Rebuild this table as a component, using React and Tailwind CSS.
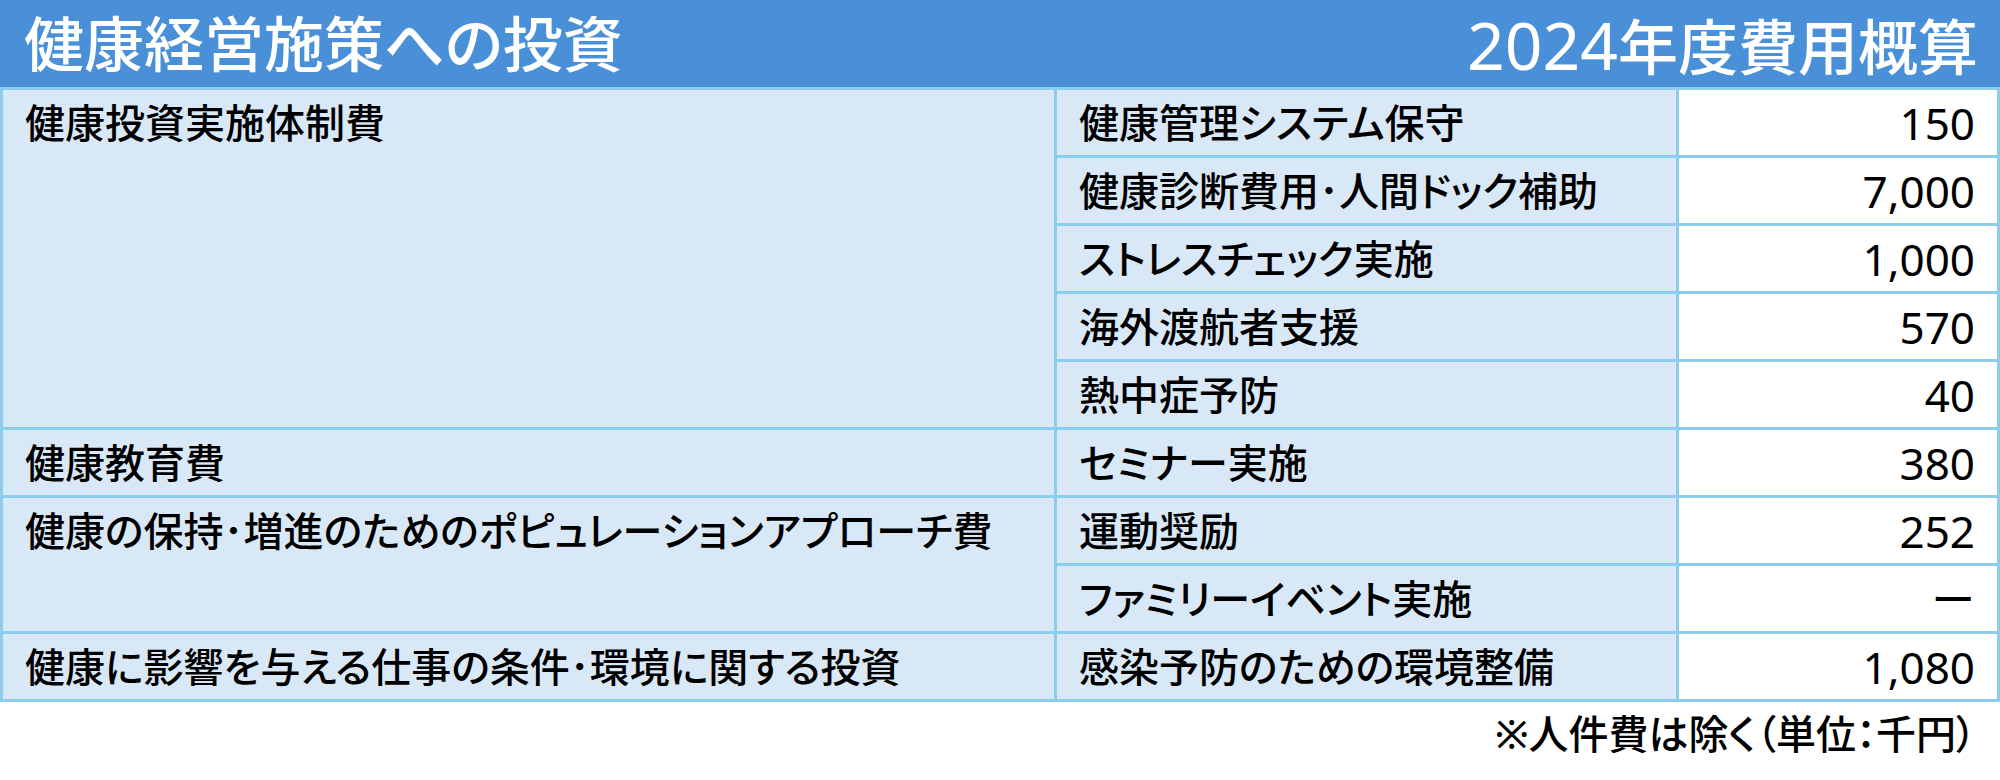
import React from 'react';

const rows = [
    { group: '健康投資実施体制費', span: 5, item: '健康管理システム保守', cost: '150' },
    { item: '健康診断費用･人間ドック補助', cost: '7,000' },
    { item: 'ストレスチェック実施', cost: '1,000' },
    { item: '海外渡航者支援', cost: '570' },
    { item: '熱中症予防', cost: '40' },
    { group: '健康教育費', span: 1, item: 'セミナー実施', cost: '380' },
    { group: '健康の保持･増進のためのポピュレーションアプローチ費', span: 2, item: '運動奨励', cost: '252' },
    { item: 'ファミリーイベント実施', cost: 'ー' },
    { group: '健康に影響を与える仕事の条件･環境に関する投資', span: 1, item: '感染予防のための環境整備', cost: '1,080' },
];

const font = { fontFamily: '"Noto Sans", "Noto Sans CJK JP", sans-serif' };

const App = () => {
    return (
        <div className="w-[2000px] h-[780px] bg-white text-black [font-feature-settings:'palt']" style={font}>
            <div className="h-[87px] bg-[#4a90d9] flex items-center justify-between pl-[24px] pr-[22px] text-white text-[60px] font-medium leading-none">
                <span>健康経営施策への投資</span>
                <span>
                    <span className="text-[66px] font-normal">2024</span>年度費用概算
                </span>
            </div>

            <table className="w-full border-collapse text-[40px] font-medium">
                <tbody>
                    {rows.map((r, i) => (
                        <tr key={i} className="h-[68px]">
                            {r.group && (
                                <td
                                    rowSpan={r.span}
                                    className="w-[1054px] align-top border-[3px] border-[#8ccdec] bg-[#d9e8f6] pl-[22px] pt-[6px] leading-[54px]"
                                >
                                    {r.group}
                                </td>
                            )}
                            <td className="w-[622px] border-[3px] border-[#8ccdec] bg-[#d9e8f6] pl-[22px] leading-none">
                                {r.item}
                            </td>
                            <td className="border-[3px] border-[#8ccdec] bg-white pr-[22px] text-right text-[44px] font-normal leading-none">
                                {r.cost}
                            </td>
                        </tr>
                    ))}
                </tbody>
            </table>

            <div className="flex justify-end pr-[24px] pt-[12px] text-[40px] font-medium leading-none">
                ※人件費は除く（単位：千円）
            </div>
        </div>
    );
};

export default App;
